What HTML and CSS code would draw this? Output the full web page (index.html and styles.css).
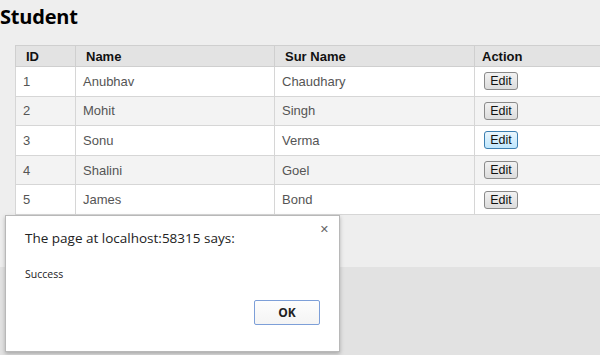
FILE: index.html
```html
<!DOCTYPE html>
<html lang="en">
<head>
  <meta charset="UTF-8" />
  <title>Student</title>
  <link rel="stylesheet" href="styles.css">
</head>
<body>

<div class="page">
  <h1>Student</h1>
  <table class="grid">
    <colgroup>
      <col class="c-id"><col class="c-name"><col class="c-sur"><col class="c-act">
    </colgroup>
    <thead>
      <tr><th>ID</th><th>Name</th><th>Sur Name</th><th class="act">Action</th></tr>
    </thead>
    <tbody>
      <tr><td>1</td><td>Anubhav</td><td>Chaudhary</td><td><button class="edit">Edit</button></td></tr>
      <tr class="alt"><td>2</td><td>Mohit</td><td>Singh</td><td><button class="edit">Edit</button></td></tr>
      <tr><td>3</td><td>Sonu</td><td>Verma</td><td><button class="edit hover">Edit</button></td></tr>
      <tr class="alt"><td>4</td><td>Shalini</td><td>Goel</td><td><button class="edit">Edit</button></td></tr>
      <tr><td>5</td><td>James</td><td>Bond</td><td><button class="edit">Edit</button></td></tr>
    </tbody>
  </table>
</div>

<div class="dialog">
  <span class="close">&#x2715;</span>
  <p class="title">The page at localhost:58315 says:</p>
  <p class="msg">Success</p>
  <div class="buttons">
    <button class="ok">OK</button>
  </div>
</div>

</body>
</html>
```

FILE: styles.css
```css
html, body {
  margin: 0;
  height: 100%;
  overflow: hidden;
}
body {
  background: #e2e2e2;
  font-family: 'Liberation Sans', Arial, sans-serif;
  color: #555;
  position: relative;
}
.page {
  background: #eeeeee;
  height: 266px;
  padding-top: 1px;
}
h1 {
  margin: 2px 0 0 0;
  font-family: 'Open Sans', sans-serif;
  font-size: 20px;
  font-weight: bold;
  color: #000;
  line-height: 28px;
  letter-spacing: -0.2px;
}
.grid {
  margin: 14px 0 0 15px;
  width: 585px;
  border-collapse: collapse;
  table-layout: fixed;
  background: #fff;
}
.c-id { width: 60px; }
.c-name { width: 199px; }
.c-sur { width: 200px; }
.c-act { width: 126px; }
.grid th {
  background: #e3e3e3;
  color: #111;
  font-size: 13px;
  font-weight: bold;
  text-align: left;
  height: 20px;
  padding: 0 10px;
  border: 1px solid #cfcfcf;
}
.grid th.act { padding-left: 7px; }
.grid td {
  height: 28.6px;
  padding: 0 7px;
  font-size: 13px;
  border: 1px solid #d6d6d6;
}
.grid th:last-child,
.grid td:last-child {
  border-right-color: transparent;
}
.grid td:last-child { padding-left: 8px; }
.grid tr.alt td {
  background: #f3f3f3;
}
button.edit {
  font-family: 'Liberation Sans', Arial, sans-serif;
  font-size: 12.5px;
  color: #111;
  padding: 0;
  height: 18px;
  width: 34px;
  margin-left: 1px;
  border: 1px solid #8a8a8a;
  border-radius: 3px;
  background: linear-gradient(#f2f2f2, #dcdcdc);
  line-height: 14px;
}
button.edit.hover {
  border-color: #3c7fb1;
  background: linear-gradient(#eaf6fd, #bee6fd);
}
.dialog {
  position: absolute;
  left: 5px;
  top: 215px;
  width: 333px;
  height: 135px;
  background: #fff;
  border: 1px solid #b8b8b8;
  box-shadow: 0 2px 4px rgba(0,0,0,0.25);
  font-family: 'Open Sans', sans-serif;
  color: #333;
}
.close {
  position: absolute;
  right: 10px;
  top: 7px;
  font-size: 11px;
  color: #666;
  font-weight: bold;
  font-family: 'DejaVu Sans', sans-serif;
}
.title {
  margin: 10px 0 0 19px;
  font-size: 13.5px;
  line-height: 24px;
  color: #222;
}
.msg {
  margin: 16px 0 0 19px;
  font-size: 10.5px;
  line-height: 16px;
  color: #222;
}
.buttons {
  display: flex;
  justify-content: flex-end;
  padding: 18px 19px 0 0;
}
.ok {
  width: 66px;
  height: 25px;
  background: linear-gradient(#fdfdfd, #f4f4f4);
  border: 1px solid #7d9fd8;
  border-radius: 2px;
  font-family: 'Open Sans', sans-serif;
  font-weight: bold;
  font-size: 12px;
  color: #222;
}
```
